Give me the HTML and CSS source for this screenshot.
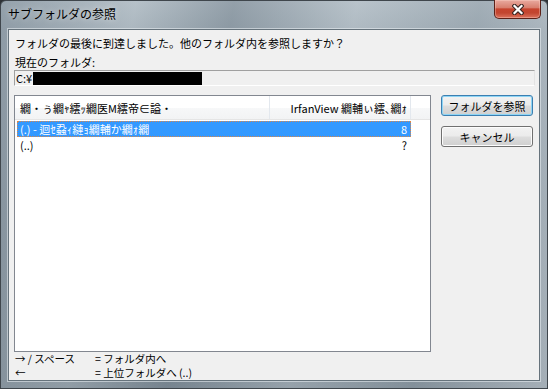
FILE: index.html
```html
<!DOCTYPE html>
<html lang="ja">

<head>
  <meta charset="UTF-8">
  <meta name="viewport" content="width=device-width, initial-scale=1.0">
  <title>サブフォルダの参照</title>
  <link rel="stylesheet" href="styles.css">
</head>

<body>
  <div class="window">
    <div class="titlebar">
      <span class="title">サブフォルダの参照</span>
      <span class="close">
        <svg width="12" height="11" viewBox="0 0 12 11">
          <path d="M2.5 2 L9.5 9 M9.5 2 L2.5 9" stroke="#3a2622" stroke-width="4.4" stroke-linecap="square" fill="none"/>
          <path d="M2.5 2 L9.5 9 M9.5 2 L2.5 9" stroke="#fff" stroke-width="2.2" stroke-linecap="square" fill="none"/>
        </svg>
      </span>
    </div>

    <div class="client">
      <p class="message">フォルダの最後に到達しました。他のフォルダ内を参照しますか？</p>
      <p class="label">現在のフォルダ:</p>
      <div class="path">C:¥<span class="redact"></span></div>

      <div class="main">
        <div class="list">
          <div class="list-header">
            <span class="col-name">繝・ぅ繝ｬ繧ｯ繝医Μ繧帝∈謚・</span>
            <span class="col-count">IrfanView 繝輔ぃ繧､繝ｫ</span>
          </div>
          <div class="row selected">
            <span class="col-name">(.) - 迴ｾ蝨ｨ縺ｮ繝輔か繝ｫ繝</span>
            <span class="col-count">8</span>
          </div>
          <div class="row">
            <span class="col-name">(..)</span>
            <span class="col-count">?</span>
          </div>
        </div>

        <div class="buttons">
          <button class="btn default">フォルダを参照</button>
          <button class="btn">キャンセル</button>
        </div>
      </div>

      <div class="keys">
        <span>→ / スペース</span><span>= フォルダ内へ</span>
        <span>←</span><span>= 上位フォルダへ (..)</span>
      </div>
    </div>
  </div>
</body>

</html>
```

FILE: styles.css
```css
body {
  margin: 0;
  width: 548px;
  height: 389px;
  overflow: hidden;
  background: #2e3236;
  font-family: "Noto Sans CJK JP", sans-serif;
  font-size: 11px;
  color: #000;
}

.window {
  box-sizing: border-box;
  width: 548px;
  height: 389px;
  display: flex;
  flex-direction: column;
  padding: 0 7px 7px 7px;
  border: 1px solid #3f464c;
  border-radius: 6px 6px 0 0;
  background:
    linear-gradient(100deg, rgba(120, 134, 146, 0.5) 0%, rgba(190, 200, 207, 0.3) 22%, rgba(110, 124, 136, 0.45) 38%, rgba(196, 205, 212, 0.35) 58%, rgba(140, 153, 163, 0.4) 78%, rgba(205, 212, 218, 0.5) 100%),
    linear-gradient(to bottom, #b3bec6 0%, #a3afb8 30px, #8b98a2 200px, #7d8a94 389px);
}

.titlebar {
  height: 28px;
  display: flex;
  justify-content: space-between;
  align-items: flex-start;
}

.title {
  padding-top: 4px;
  font-size: 12px;
  line-height: 18px;
  color: #000;
  text-shadow: 0 0 6px rgba(255, 255, 255, 0.7);
}

.close {
  width: 45px;
  height: 18px;
  margin: -1px -1px 0 0;
  display: flex;
  justify-content: center;
  align-items: center;
  border: 1px solid #5c2118;
  border-top: none;
  border-radius: 0 0 5px 5px;
  background: linear-gradient(to bottom, #e9aa9f 0%, #d8806f 42%, #c6442e 50%, #c24630 72%, #dc735e 100%);
  box-shadow: inset 0 0 0 1px rgba(255, 220, 210, 0.35);
}

.client {
  flex: 1;
  background: #f0f0f0;
  border: 1px solid #66737c;
  box-shadow: 0 0 0 1px rgba(235, 240, 244, 0.55);
}

.message {
  margin: 6px 0 0 0;
  padding-left: 6px;
  line-height: 15px;
}

.label {
  margin: 4px 0 1px 0;
  padding-left: 6px;
  line-height: 14px;
}

.path {
  box-sizing: border-box;
  height: 16px;
  margin: 0 4px 0 5px;
  padding-left: 1px;
  display: flex;
  align-items: flex-end;
  line-height: 14px;
  border: 1px solid;
  border-color: #a0a0a0 #e3e3e3 #fff #a0a0a0;
}

.redact {
  width: 169px;
  height: 13px;
  margin-left: 1px;
  background: #000;
}

.main {
  display: flex;
  margin-top: 9px;
}

.list {
  box-sizing: border-box;
  width: 417px;
  height: 257px;
  margin-left: 5px;
  background: #fff;
  border: 1px solid #828790;
}

.list-header {
  display: flex;
  height: 23px;
  border-bottom: 1px solid #e5e5e5;
  margin-bottom: 1px;
  background: linear-gradient(to bottom, #fff 0%, #fff 50%, #f7f8f9 51%, #f2f3f4 100%);
}

.list-header span {
  display: flex;
  align-items: center;
  border-right: 1px solid #e3e8ee;
  box-sizing: border-box;
}

.list-header .col-name {
  width: 255px;
  padding-left: 5px;
}

.list-header .col-count {
  width: 141px;
  justify-content: flex-end;
  padding-right: 3px;
}

.row {
  display: flex;
  margin-left: 2px;
  width: 394px;
  height: 16px;
  line-height: 16px;
}

.row span {
  box-sizing: border-box;
  white-space: nowrap;
}

.row .col-name {
  width: 253px;
  padding-left: 3px;
}

.row .col-count {
  width: 141px;
  text-align: right;
  padding-right: 4px;
}

.row.selected {
  background: #3399ff;
  color: #fff;
  outline: 1px dotted #d9874a;
  outline-offset: -1px;
}

.buttons {
  display: flex;
  flex-direction: column;
  gap: 10px;
  margin-left: 10px;
}

.btn {
  width: 92px;
  height: 21px;
  padding: 0;
  font-family: inherit;
  font-size: 11px;
  color: #000;
  border: 1px solid #707070;
  border-radius: 3px;
  background: linear-gradient(to bottom, #f2f2f2 0%, #ebebeb 48%, #dddddd 52%, #cfcfcf 100%);
  box-shadow: inset 0 0 0 1px #fcfcfc;
}

.btn.default {
  border-color: #3c7fb1;
  box-shadow: inset 0 0 0 1px #8ed5f5;
}

.keys {
  display: grid;
  grid-template-columns: 80px auto;
  padding-left: 6px;
  font-size: 10.5px;
  line-height: 14px;
}
```
